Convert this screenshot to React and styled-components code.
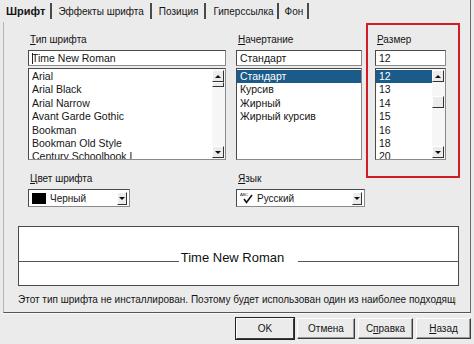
import styled, { createGlobalStyle } from "styled-components";

const GlobalStyle = createGlobalStyle`
  html, body {
    margin: 0;
    padding: 0;
    background: #ebebeb;
  }
  body {
    font-family: "Liberation Sans", Arial, sans-serif;
    font-size: 10px;
    color: #151515;
  }
  * { box-sizing: border-box; }
`;

const Dialog = styled.div`
  width: 474px;
  height: 344px;
  overflow: hidden;
  background: #ebebeb;
  display: flex;
  flex-direction: column;
`;

const TabBar = styled.div`
  height: 22px;
  margin-right: 3px;
  border-right: 1px solid #6a6a6a;
  display: flex;
  align-items: center;
  padding-left: 1px;
`;

const Tab = styled.div`
  height: 16px;
  display: flex;
  align-items: center;
  padding: 0 ${(p) => p.$pr ?? 6}px 0 ${(p) => p.$pl ?? 6}px;
  border-right: 2px solid #4a4a4a;
  font-size: ${(p) => (p.$active ? "11px" : "10px")};
  font-weight: ${(p) => (p.$active ? 700 : 400)};
  white-space: nowrap;
`;

const Panel = styled.div`
  height: 291px;
  margin: 0 3px;
  border-left: 1px solid #b4b4b4;
  border-right: 1px solid #6a6a6a;
  border-bottom: 1px solid #555;
  box-shadow: 0 1px 0 #fafafa;
  padding: 1px 0 0 14px;
  display: flex;
  flex-direction: column;
`;

const TopGrid = styled.div`
  margin-left: 10px;
  display: grid;
  grid-template-columns: 208px 130px 94px;
  grid-template-rows: auto auto;
  align-items: start;
`;

const Column = styled.div`
  padding-top: 11px;
  width: ${(p) => p.$w}px;
`;

const SizeBox = styled.div`
  grid-column: 3;
  grid-row: 1 / span 2;
  height: 155px;
  border: 2px solid #d21c24;
  padding: 9px 12px 0 7px;
`;

const Label = styled.div`
  line-height: 12px;
  height: 12px;
  margin: 0 0 4px 2px;
  white-space: nowrap;
`;

const Input = styled.div`
  height: 16px;
  background: #fff;
  border: 1px solid #8a8a8a;
  border-top-color: #4a4a4a;
  border-left-color: #4a4a4a;
  padding-left: 3px;
  font-size: 10.5px;
  line-height: 14px;
  margin-bottom: 2px;
  white-space: nowrap;
`;

const Caret = styled.span`
  display: inline-block;
  width: 1px;
  height: 11px;
  margin-right: -1px;
  background: #222;
  vertical-align: -2px;
`;

const List = styled.div`
  height: 92px;
  background: #fff;
  border: 1px solid #8a8a8a;
  border-top-color: #4a4a4a;
  border-left-color: #4a4a4a;
  display: flex;
  overflow: hidden;
`;

const Items = styled.div`
  flex: 1;
  padding-top: 1px;
  overflow: hidden;
`;

const Item = styled.div`
  height: 13.4px;
  line-height: 13.4px;
  padding-left: 3px;
  font-size: 10.5px;
  white-space: nowrap;
  background: ${(p) => (p.$selected ? "#1b5b89" : "transparent")};
  color: ${(p) => (p.$selected ? "#fff" : "#151515")};
`;

const ScrollBar = styled.div`
  width: 13px;
  background: #f6f6f6;
  display: flex;
  flex-direction: column;
  padding: 1px 0 1px;
`;

const ScrollTrack = styled.div`
  flex: 1;
`;

const ScrollButton = styled.div`
  height: 12px;
  width: 12px;
  background: #ececec;
  border: 1px solid;
  border-color: #fff #333 #333 #fff;
  display: flex;
  align-items: center;
  justify-content: center;
  &::after {
    content: "";
    border-left: 3px solid transparent;
    border-right: 3px solid transparent;
    ${(p) =>
      p.$down
        ? "border-top: 3px solid #111;"
        : "border-bottom: 3px solid #111;"}
  }
`;

const Thumb = styled.div`
  width: 12px;
  height: ${(p) => p.$h}px;
  margin-top: ${(p) => p.$top}px;
  background: #ececec;
  border: 1px solid;
  border-color: #fff #333 #333 #fff;
`;

const BottomCell = styled.div`
  padding-top: 13px;
`;

const Select = styled.div`
  width: ${(p) => p.$w}px;
  height: 18px;
  background: #fff;
  border: 1px solid #8a8a8a;
  border-top-color: #4a4a4a;
  border-left-color: #4a4a4a;
  display: flex;
  align-items: center;
  padding: 0 2px 0 3px;
  gap: 4px;
`;

const SelectText = styled.span`
  flex: 1;
  white-space: nowrap;
`;

const Swatch = styled.span`
  width: 14px;
  height: 11px;
  background: #000;
`;

const DropButton = styled.span`
  width: 10px;
  height: 13px;
  background: #ececec;
  border: 1px solid;
  border-color: #fff #333 #333 #fff;
  display: flex;
  align-items: center;
  justify-content: center;
  &::after {
    content: "";
    border-left: 3px solid transparent;
    border-right: 3px solid transparent;
    border-top: 3px solid #111;
  }
`;

const LangIcon = styled.span`
  position: relative;
  width: 13px;
  height: 11px;
  font-size: 4px;
  line-height: 4px;
  letter-spacing: -0.2px;
`;

const Preview = styled.div`
  margin-top: 19px;
  width: 441px;
  height: 60px;
  background: #fff;
  border: 1px solid #4a4a4a;
  display: flex;
  align-items: flex-end;
  padding-bottom: 21px;
`;

const Rule = styled.div`
  flex: 1;
  border-bottom: 1px solid #555;
  margin-bottom: 2px;
`;

const PreviewText = styled.span`
  font-size: 13px;
  line-height: 13px;
  color: #111;
  margin: 0 14px 0 2px;
`;

const Status = styled.div`
  margin-top: 8px;
  white-space: nowrap;
  overflow: hidden;
  width: 438px;
  line-height: 12px;
`;

const ButtonRow = styled.div`
  display: flex;
  justify-content: flex-end;
  gap: 3px;
  padding: 5px 3px 0 0;
`;

const Button = styled.div`
  width: ${(p) => p.$w}px;
  height: 21px;
  display: flex;
  align-items: center;
  justify-content: center;
  background: #ebebeb;
  border: 1px solid;
  border-color: #fdfdfd #3a3a3a #3a3a3a #fdfdfd;
  box-shadow: ${(p) => (p.$default ? "0 0 0 1px #222" : "inset -1px -1px 0 #9a9a9a")};
`;

const fonts = [
  "Arial",
  "Arial Black",
  "Arial Narrow",
  "Avant Garde Gothic",
  "Bookman",
  "Bookman Old Style",
  "Century Schoolbook L",
];
const styles = ["Стандарт", "Курсив", "Жирный", "Жирный курсив"];
const sizes = ["12", "13", "14", "15", "16", "18", "20"];

function App() {
  return (
    <Dialog>
      <GlobalStyle />
      <TabBar>
        <Tab $active $pl={5} $pr={5}>Шрифт</Tab>
        <Tab>Эффекты шрифта</Tab>
        <Tab $pl={7}>Позиция</Tab>
        <Tab $pl={7} $pr={3}>Гиперссылка</Tab>
        <Tab $pl={6} $pr={4}>Фон</Tab>
      </TabBar>

      <Panel>
        <TopGrid>
          <Column $w={198}>
            <Label><u>Т</u>ип шрифта</Label>
            <Input><Caret />Time New Roman</Input>
            <List>
              <Items>
                {fonts.map((f) => (
                  <Item key={f}>{f}</Item>
                ))}
              </Items>
              <ScrollBar>
                <ScrollButton />
                <ScrollTrack>
                  <Thumb $h={5} $top={0} />
                </ScrollTrack>
                <ScrollButton $down />
              </ScrollBar>
            </List>
          </Column>

          <Column $w={126}>
            <Label><u>Н</u>ачертание</Label>
            <Input>Стандарт</Input>
            <List>
              <Items>
                {styles.map((s, i) => (
                  <Item key={s} $selected={i === 0}>{s}</Item>
                ))}
              </Items>
            </List>
          </Column>

          <SizeBox>
            <Label><u>Р</u>азмер</Label>
            <Input>12</Input>
            <List>
              <Items>
                {sizes.map((s, i) => (
                  <Item key={s} $selected={i === 0}>{s}</Item>
                ))}
              </Items>
              <ScrollBar>
                <ScrollButton />
                <ScrollTrack>
                  <Thumb $h={12} $top={14} />
                </ScrollTrack>
                <ScrollButton $down />
              </ScrollBar>
            </List>
          </SizeBox>

          <BottomCell>
            <Label><u>Ц</u>вет шрифта</Label>
            <Select $w={102}>
              <Swatch />
              <SelectText>Черный</SelectText>
              <DropButton />
            </Select>
          </BottomCell>

          <BottomCell>
            <Label><u>Я</u>зык</Label>
            <Select $w={129}>
              <LangIcon>
                ABC
                <svg width="13" height="11" viewBox="0 0 13 11" style={{ position: "absolute", left: 0, top: 0 }}>
                  <path d="M4 6 L6.5 9.5 L12 2" fill="none" stroke="#111" strokeWidth="1.6" />
                </svg>
              </LangIcon>
              <SelectText>Русский</SelectText>
              <DropButton />
            </Select>
          </BottomCell>
        </TopGrid>

        <Preview>
          <Rule />
          <PreviewText>Time New Roman</PreviewText>
          <Rule />
        </Preview>

        <Status>
          Этот тип шрифта не инсталлирован. Поэтому будет использован один из наиболее подходящих
        </Status>
      </Panel>

      <ButtonRow>
        <Button $w={58} $default>OK</Button>
        <Button $w={58}>Отмена</Button>
        <Button $w={55}>С<u>п</u>равка</Button>
        <Button $w={55}><u>Н</u>азад</Button>
      </ButtonRow>
    </Dialog>
  );
}

export default App;
